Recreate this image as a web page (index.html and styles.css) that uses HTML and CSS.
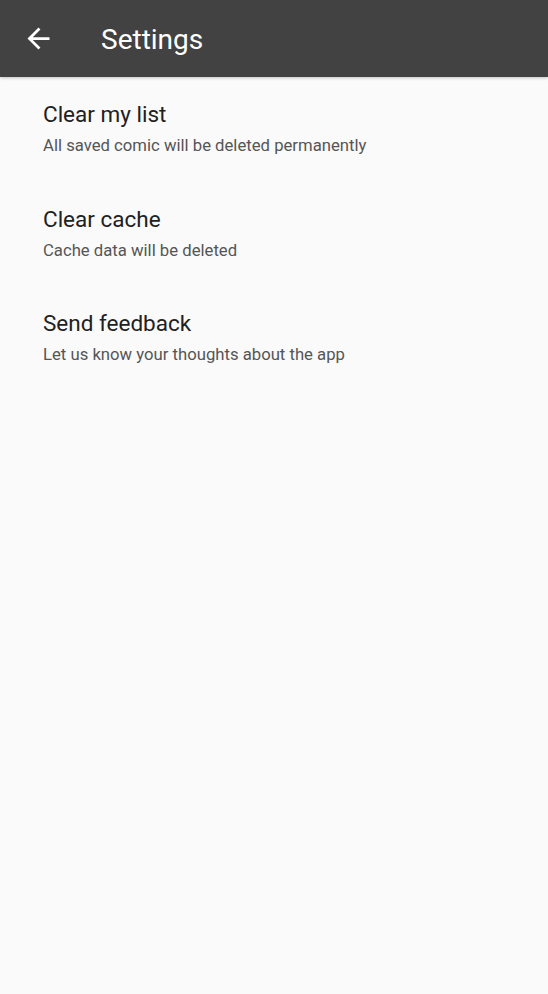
FILE: index.html
```html
<!DOCTYPE html>
<html>
<head>
<meta charset="utf-8">
<link rel="stylesheet" href="styles.css">
</head>
<body>
<header class="toolbar">
  <button class="back" aria-label="Back">
    <svg width="33" height="33" viewBox="0 0 24 24"><path d="M20 11H7.83l5.59-5.59L12 4l-8 8 8 8 1.41-1.41L7.83 13H20v-2z" fill="#fff"/></svg>
  </button>
  <h1 class="title">Settings</h1>
</header>
<main class="list">
  <div class="item">
    <div class="item-title">Clear my list</div>
    <div class="item-sub">All saved comic will be deleted permanently</div>
  </div>
  <div class="item">
    <div class="item-title">Clear cache</div>
    <div class="item-sub">Cache data will be deleted</div>
  </div>
  <div class="item">
    <div class="item-title">Send feedback</div>
    <div class="item-sub">Let us know your thoughts about the app</div>
  </div>
</main>
</body>
</html>
```
FILE: styles.css
```css
html, body {
  margin: 0;
  padding: 0;
  background: #fafafa;
  font-family: Roboto, "Noto Sans", sans-serif;
  height: 100%;
}
.toolbar {
  height: 77px;
  background: #424242;
  display: flex;
  align-items: center;
  box-shadow: 0 1px 3px rgba(0,0,0,0.22);
  position: relative;
}
.back {
  background: none;
  border: 0;
  padding: 0;
  margin: 0 0 0 22px;
  width: 33px;
  height: 33px;
  display: flex;
}
.title {
  margin: 3px 0 0 46px;
  color: #fff;
  font-weight: 400;
  font-size: 28px;
  line-height: 1;
}
.list {
  padding-top: 23px;
}
.item {
  padding: 0 43px;
  height: 104.5px;
}
.item-title {
  font-size: 22.5px;
  color: #212121;
  line-height: 28px;
}
.item-sub {
  font-size: 16.7px;
  color: #555;
  line-height: 20px;
  margin-top: 8px;
}
```
